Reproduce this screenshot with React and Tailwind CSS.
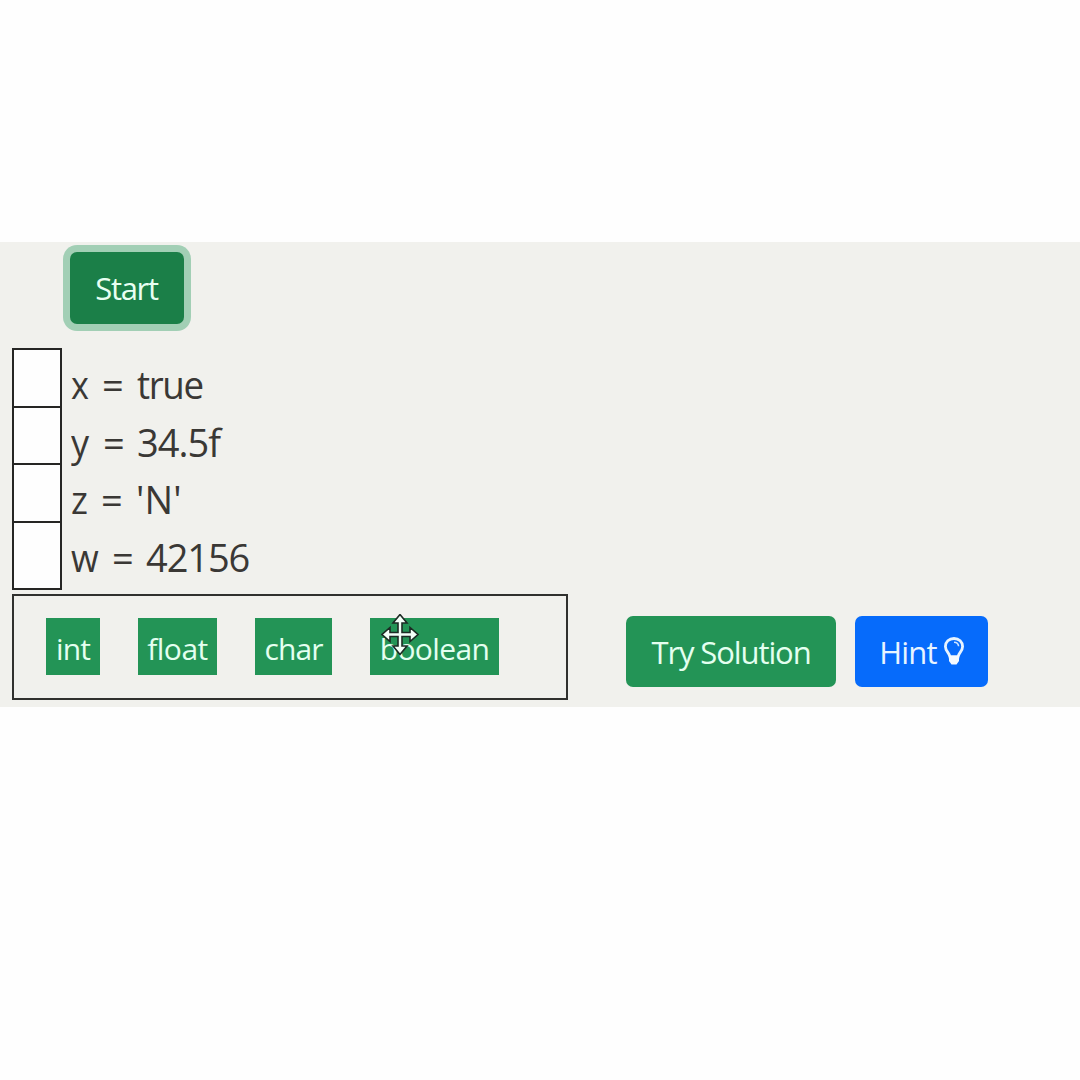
import React from 'react';

const rows = [
  { name: 'x', value: 'true', nameW: 'w-[31px]', eqW: 'w-[35px]', box: 'h-[58px]', cell: 'h-[60px]', track: 'tracking-[-1.4px] inline-block origin-left scale-x-[0.965]', nameScale: 'scale-x-[0.9]' },
  { name: 'y', value: '34.5f', nameW: 'w-[32px]', eqW: 'w-[34px]', box: 'h-[57px]', cell: 'h-[59px]', track: 'tracking-[-1px]', nameScale: 'scale-x-[0.95]' },
  { name: 'z', value: "'N'", nameW: 'w-[30px]', eqW: 'w-[35px]', box: 'h-[58px]', cell: 'h-[60px]', track: 'tracking-[0.2px]', nameScale: 'scale-x-[0.95]' },
  { name: 'w', value: '42156', nameW: 'w-[41px]', eqW: 'w-[34px]', box: 'h-[69px]', cell: 'h-[69px]', track: 'tracking-[-1.1px]', nameScale: 'scale-x-[0.94]' },
];

const chips = [
  { label: 'int', cls: 'w-[54px] tracking-[-0.9px]' },
  { label: 'float', cls: 'w-[79px] tracking-[-0.5px]' },
  { label: 'char', cls: 'w-[77px] tracking-[-0.9px]' },
  { label: 'boolean', cls: 'w-[129px] tracking-[-0.6px]' },
];

function MoveCursor() {
  return (
    <svg className="absolute left-[11px] top-[-4px]" width="38" height="42" viewBox="0 0 38 42">
      <path
        d="M19 1 L26 9.5 H21 V19 H29 V14 L37 21 L29 28 V23 H21 V32.5 H26 L19 41 L12 32.5 H17 V23 H9 V28 L1 21 L9 14 V19 H17 V9.5 H12 Z"
        transform="translate(0 -0.5)"
        fill="#f3fff8"
        stroke="#1c2b24"
        strokeWidth="1.6"
      />
    </svg>
  );
}

function Bulb() {
  return (
    <svg className="ml-[7px] mt-[-2px] shrink-0" width="20" height="28" viewBox="0 0 20 28" fill="none">
      <path
        d="M10 1.5 C5 1.5 1.4 5 1.4 9.6 C1.4 14.2 5.2 15.5 6 20 H14 C14.8 15.5 18.6 14.2 18.6 9.6 C18.6 5 15 1.5 10 1.5 Z"
        stroke="#e8f4ff"
        strokeWidth="2.8"
      />
      <path d="M10 5.2 C13 5.2 14.4 7 14.6 9.3" stroke="#cfe5ff" strokeWidth="1.6" />
      <path d="M5 18.5 H15 V24 L12.5 27.5 H7.5 L5 24 Z" fill="#f4faff" />
    </svg>
  );
}

export default function App() {
  return (
    <div className="h-[1080px] w-[1080px] overflow-hidden bg-[#fefefe] pt-[242px] font-['Open_Sans',sans-serif] whitespace-nowrap">
      <main className="h-[465px] bg-[#f1f1ed] pt-[10px]">
        <button className="ml-[70px] flex h-[72px] w-[114px] items-center justify-center rounded-[7px] bg-[#1b7f48] pr-[1px] pt-[1px] text-[31px] tracking-[-1.3px] text-[#e8fff2] shadow-[0_0_0_7px_#a2cfb5]">
          Start
        </button>

        <div className="mt-[24px] ml-[12px] flex w-[500px] flex-col">
          {rows.map((r) => (
            <div key={r.name} className={`flex ${r.box}`}>
              <div className={`w-[50px] shrink-0 border-2 border-[#262624] bg-[#fefefe] ${r.cell}`} />
              <div className="ml-[9px] flex h-[57px] items-baseline pt-[10px] text-[38px] leading-[53px] text-[#3a3835]">
                <span className={r.nameW}>
                  <span className={`inline-block origin-left ${r.nameScale}`}>{r.name}</span>
                </span>
                <span className={r.eqW}>=</span>
                <span className={r.track}>{r.value}</span>
              </div>
            </div>
          ))}
        </div>

        <div className="mt-[4px] flex items-start">
          <section className="ml-[12px] flex h-[106px] w-[556px] gap-[38px] border-2 border-[#30312e] pt-[22px] pl-[32px]">
            {chips.map((c) => (
              <div
                key={c.label}
                className={`relative flex h-[57px] shrink-0 items-center justify-center bg-[#239456] pt-[3px] text-[30px] text-[#e4fff0] ${c.cls}`}
              >
                {c.label}
                {c.label === 'boolean' && <MoveCursor />}
              </div>
            ))}
          </section>
          <button className="mt-[22px] ml-[58px] flex h-[71px] w-[210px] items-center justify-center rounded-[7px] bg-[#239456] pt-[1px] text-[31px] tracking-[-1.1px] text-[#e4fff0]">
            Try Solution
          </button>
          <button className="mt-[22px] ml-[19px] flex h-[71px] w-[133px] items-center justify-center rounded-[7px] bg-[#066bfb] pt-[1px] text-[31px] tracking-[-0.8px] text-[#e8f4ff]">
            Hint
            <Bulb />
          </button>
        </div>
      </main>
    </div>
  );
}
